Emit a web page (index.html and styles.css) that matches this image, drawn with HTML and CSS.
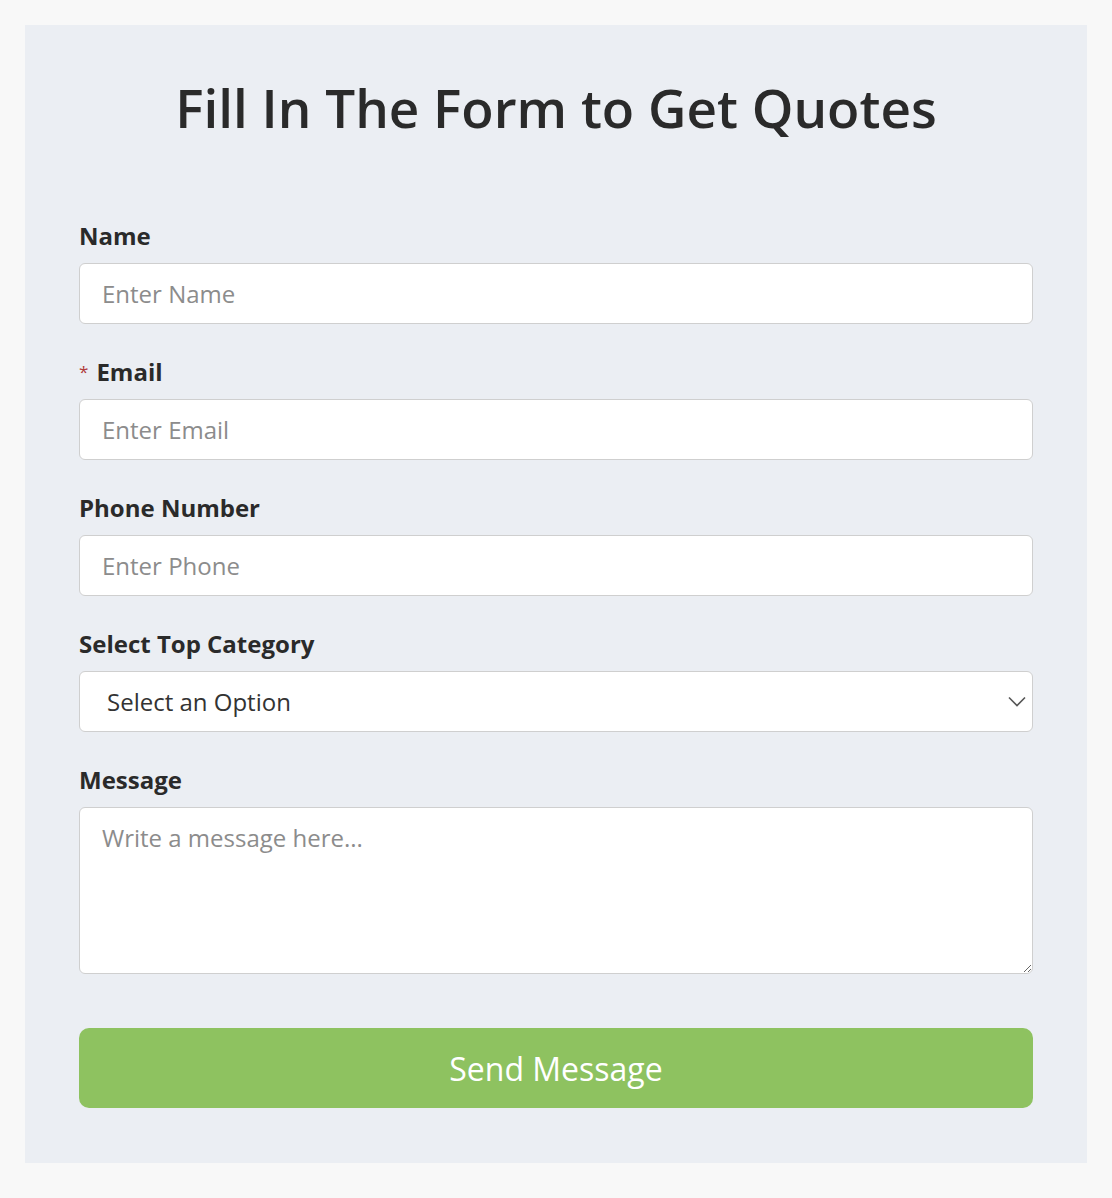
FILE: index.html
```html
<!DOCTYPE html>
<html lang="en">
<head>
<meta charset="utf-8">
<title>Get Quotes</title>
<link rel="stylesheet" href="styles.css">
</head>
<body>
<div class="card">
  <h1 class="title">Fill In The Form to Get Quotes</h1>
  <form class="form">
    <div class="group">
      <label class="label" for="name">Name</label>
      <input class="field" id="name" type="text" placeholder="Enter Name">
    </div>
    <div class="group">
      <label class="label" for="email"><span class="req">*</span>Email</label>
      <input class="field" id="email" type="email" placeholder="Enter Email">
    </div>
    <div class="group">
      <label class="label" for="phone">Phone Number</label>
      <input class="field" id="phone" type="tel" placeholder="Enter Phone">
    </div>
    <div class="group">
      <label class="label" for="cat">Select Top Category</label>
      <div class="select-wrap">
        <select class="field select" id="cat">
          <option>Select an Option</option>
        </select>
        <svg class="chev" width="18" height="11" viewBox="0 0 18 11"><path d="M1 1.5 L9 9.5 L17 1.5" fill="none" stroke="#555" stroke-width="1.6"/></svg>
      </div>
    </div>
    <div class="group">
      <label class="label" for="msg">Message</label>
      <textarea class="field area" id="msg" placeholder="Write a message here..."></textarea>
    </div>
    <button class="btn" type="button">Send Message</button>
  </form>
</div>
</body>
</html>
```
FILE: styles.css
```css
html, body {
  margin: 0;
  background: #f8f8f8;
}
body {
  padding: 25px;
  font-family: "Open Sans", "Noto Sans", sans-serif;
  color: #2b2b2b;
}
.card {
  background: #ebeef3;
  padding: 50px 54px 55px;
}
.title {
  margin: 0 0 80px;
  font-size: 53px;
  line-height: 66px;
  font-weight: 600;
  text-align: center;
  color: #2a2a2a;
}
.form {
  display: flex;
  flex-direction: column;
}
.group {
  display: flex;
  flex-direction: column;
  margin-bottom: 33px;
}
.label {
  display: block;
  height: 30px;
  font-size: 24px;
  line-height: 30px;
  font-weight: 700;
  margin-bottom: 12px;
  color: #2a2a2a;
}
.req {
  position: relative;
  top: -3px;
  color: #b03a3a;
  font-size: 17px;
  font-weight: 400;
  margin-right: 8px;
}
.field {
  box-sizing: border-box;
  width: 100%;
  height: 61px;
  border: 1px solid #cfcfcf;
  border-radius: 6px;
  background: #fff;
  padding: 0 22px;
  font-family: inherit;
  font-size: 24px;
  color: #333;
  outline: none;
}
.field::placeholder {
  color: #8c8c8c;
}
.select-wrap {
  position: relative;
}
.select {
  appearance: none;
  -webkit-appearance: none;
  padding-left: 27px;
  color: #333;
}
.chev {
  position: absolute;
  right: 7px;
  top: 25px;
  pointer-events: none;
}
.area {
  height: 167px;
  padding-top: 13px;
  resize: both;
  display: block;
}
.btn {
  margin-top: 21px;
  height: 80px;
  border: none;
  border-radius: 10px;
  background: #8ec260;
  color: #fff;
  font-family: inherit;
  font-size: 32px;
  font-weight: 400;
  cursor: pointer;
}
```
